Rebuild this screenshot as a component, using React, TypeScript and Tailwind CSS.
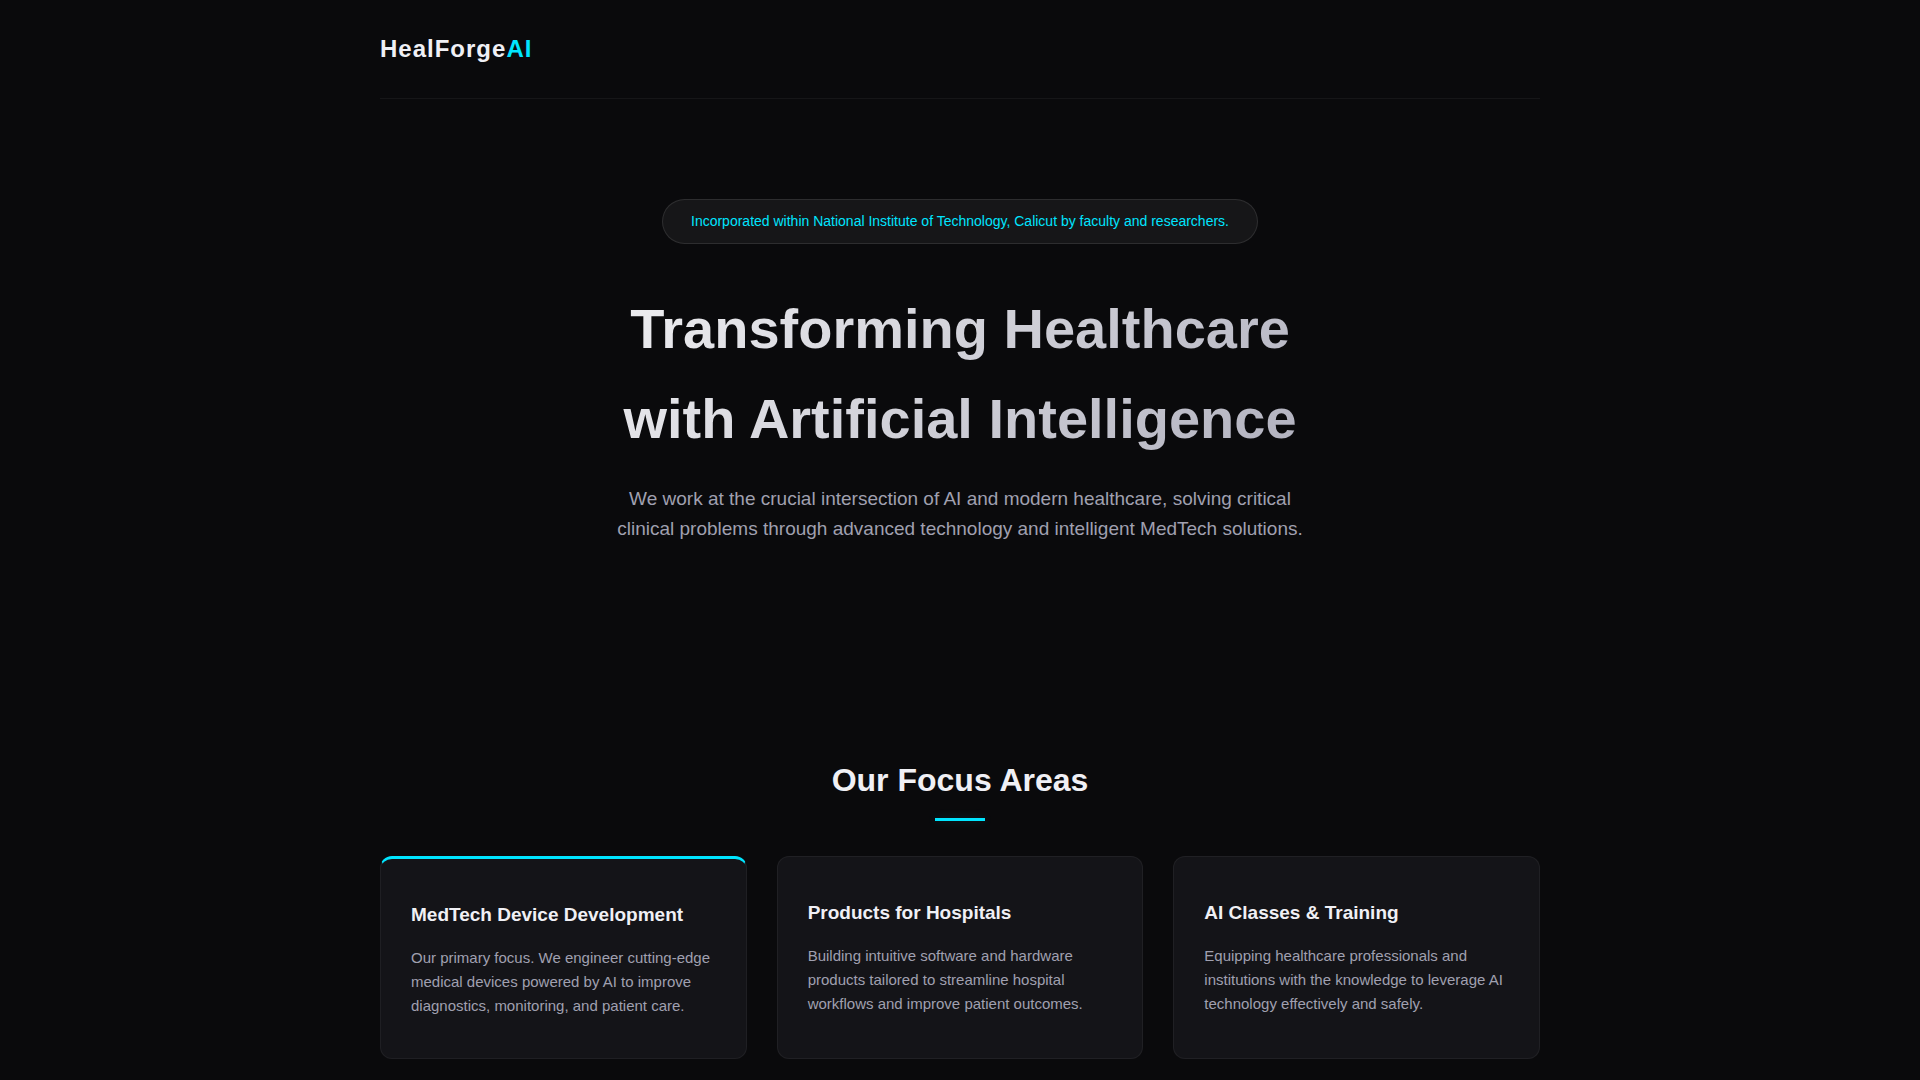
const areas = [
  {
    title: "MedTech Device Development",
    text: "Our primary focus. We engineer cutting-edge medical devices powered by AI to improve diagnostics, monitoring, and patient care.",
    primary: true,
  },
  {
    title: "Products for Hospitals",
    text: "Building intuitive software and hardware products tailored to streamline hospital workflows and improve patient outcomes.",
    primary: false,
  },
  {
    title: "AI Classes & Training",
    text: "Equipping healthcare professionals and institutions with the knowledge to leverage AI technology effectively and safely.",
    primary: false,
  },
];

export default function App() {
  return (
    <div className="min-h-screen bg-[#0a0a0c] font-['Liberation_Sans',Arial,sans-serif] text-[#f0f0f5]">
      <div className="mx-auto max-w-[1200px] px-5">
        <header className="border-b border-white/5 py-[30px]">
          <div className="text-[24px] font-bold leading-[38px] tracking-[1px]">
            HealForge<span className="text-[#00e5ff]">AI</span>
          </div>
        </header>

        <main>
          <section className="flex flex-col items-center py-[100px] text-center">
            <p className="mb-10 rounded-full border border-white/10 bg-white/5 px-7 py-[10px] text-[14px] leading-[23px] text-[#00e5ff]">
              Incorporated within National Institute of Technology, Calicut by faculty and researchers.
            </p>
            <h1 className="mb-5 w-full bg-[linear-gradient(135deg,#ffffff_0%,#a0a0b0_100%)] bg-clip-text text-[56px] font-bold leading-[90px] text-transparent">
              Transforming Healthcare
              <br />
              with Artificial Intelligence
            </h1>
            <p className="max-w-[700px] text-[19px] leading-[30px] text-[#a0a0b0]">
              We work at the crucial intersection of AI and modern healthcare, solving critical clinical
              problems through advanced technology and intelligent MedTech solutions.
            </p>
          </section>

          <section className="pt-[111px] pb-5">
            <h2 className="text-center text-[32px] font-bold leading-[51px]">Our Focus Areas</h2>
            <div className="mx-auto mt-3 mb-[35px] h-[3px] w-[50px] bg-[#00e5ff] shadow-[0_0_10px_rgba(0,229,255,0.15)]" />
            <div className="grid grid-cols-1 gap-[30px] md:grid-cols-3">
              {areas.map((area) => (
                <article
                  key={area.title}
                  className={
                    area.primary
                      ? "rounded-xl border border-t-3 border-white/5 border-t-[#00e5ff] bg-[#141418] px-[30px] py-10"
                      : "rounded-xl border border-white/5 bg-[#141418] px-[30px] py-10"
                  }
                >
                  <h3 className="mb-4 text-[19px] font-bold leading-[31px]">{area.title}</h3>
                  <p className="text-[15px] leading-6 text-[#a0a0b0]">{area.text}</p>
                </article>
              ))}
            </div>
          </section>
        </main>
      </div>
    </div>
  );
}
